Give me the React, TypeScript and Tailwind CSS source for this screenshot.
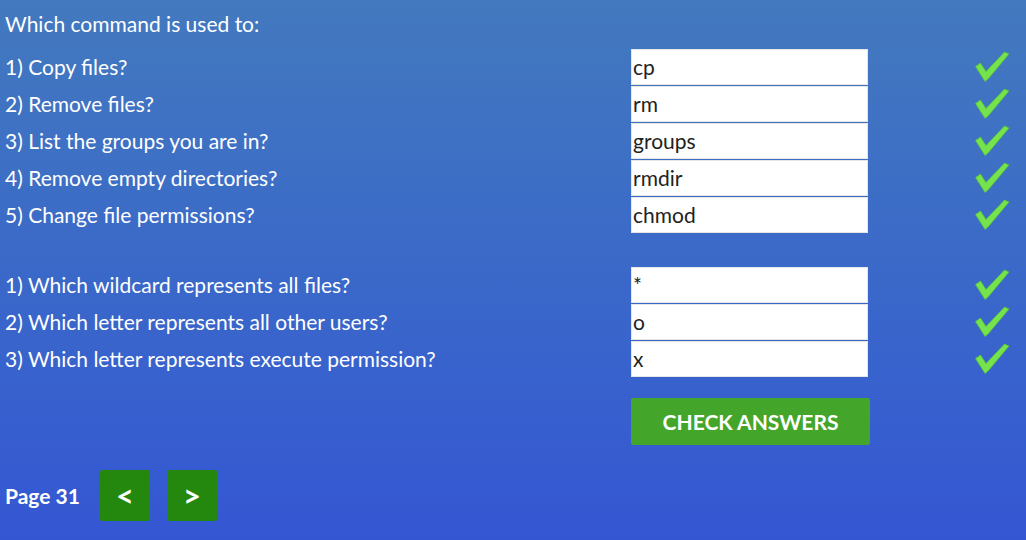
const partOne = [
  { q: "1) Copy files?", a: "cp" },
  { q: "2) Remove files?", a: "rm" },
  { q: "3) List the groups you are in?", a: "groups" },
  { q: "4) Remove empty directories?", a: "rmdir" },
  { q: "5) Change file permissions?", a: "chmod" },
];

const partTwo = [
  { q: "1) Which wildcard represents all files?", a: "*" },
  { q: "2) Which letter represents all other users?", a: "o" },
  { q: "3) Which letter represents execute permission?", a: "x" },
];

function Tick() {
  return (
    <svg width="36" height="34" viewBox="0 0 36 34" className="block">
      <path
        d="M1.5 16.5 L6.5 13 L12 21.5 L30.5 2 L35 4 L14.5 28.5 L11 31.5 Z"
        fill="#74e34c"
        stroke="#58bd3c"
        strokeWidth="0.8"
        strokeLinejoin="round"
      />
    </svg>
  );
}

function Row({ q, a }: { q: string; a: string }) {
  return (
    <div className="flex items-center h-[37px]">
      <div className="w-[626px] text-white text-[21px] leading-none">{q}</div>
      <input
        readOnly
        value={a}
        className="w-[237px] h-[36px] bg-white border border-[#e6e6e6] px-[1px] text-[21px] text-[#222] outline-none"
        style={{ fontFamily: "Lato, sans-serif" }}
      />
      <div className="ml-[106px] pt-[1px]">
        <Tick />
      </div>
    </div>
  );
}

export default function App() {
  return (
    <div
      className="w-[1026px] h-[540px] overflow-hidden bg-gradient-to-b from-[#4379be] to-[#3556d3] pl-[5px] pt-[11px]"
      style={{ fontFamily: "Lato, 'Open Sans', sans-serif" }}
    >
      <div className="text-white text-[21px] leading-[26px] mb-[11px]">Which command is used to:</div>

      <div className="flex flex-col">
        {partOne.map((r) => (
          <Row key={r.q} {...r} />
        ))}
      </div>

      <div className="flex flex-col mt-[33px]">
        {partTwo.map((r) => (
          <Row key={r.q} {...r} />
        ))}
      </div>

      <div className="pl-[626px] mt-[21px]">
        <button className="w-[239px] h-[47px] bg-[#43a62b] rounded-[2px] text-white font-bold text-[21px]">
          CHECK ANSWERS
        </button>
      </div>

      <div className="flex items-center mt-[25px]">
        <span className="text-white font-bold text-[21px] w-[95px]">Page 31</span>
        <button className="w-[50px] h-[51px] bg-[#24880e] rounded-[2px] text-white font-bold text-[31px] leading-none">&lt;</button>
        <button className="w-[50px] h-[51px] bg-[#24880e] rounded-[2px] text-white font-bold text-[31px] leading-none ml-[17px]">&gt;</button>
      </div>
    </div>
  );
}
